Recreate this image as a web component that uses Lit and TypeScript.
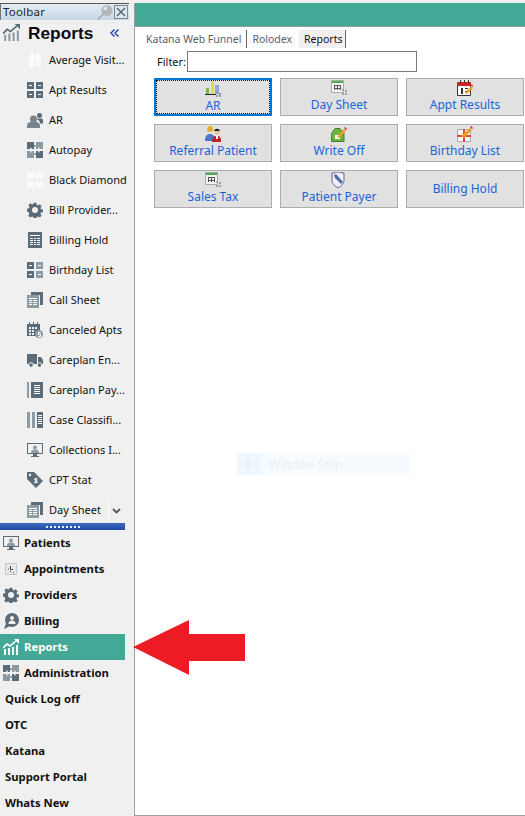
import { LitElement, html, css, svg } from "lit";
import { customElement } from "lit/decorators.js";

const G = "#5b6b77";
const L = "#8f9ba3";
const icons: Record<string, any> = {
  binoc: svg`<path fill="#fbfbfb" d="M2 6 4 1h3v4h2V1h3l2 5v9H9V9H7v6H2z"/>`,
  grid: svg`<path fill="${G}" d="M0 0h7v7H0zM9 0h7v7H9zM0 9h7v7H0zM9 9h7v7H9z"/><path fill="#fff" d="M2 3h3v1H2zM11 3h3v1h-3zM2 12h3v1H2zM11 12h3v1h-3z"/>`,
  gridL: svg`<path fill="${G}" d="M0 0h7v7H0zM0 9h7v7H0z"/><path fill="${L}" d="M9 0h7v7H9zM9 9h7v7H9z"/><path fill="#fff" d="M2 3h3v1H2zM11 3h3v1h-3zM2 12h3v1H2zM11 12h3v1h-3z"/>`,
  people: svg`<circle cx="6.500" cy="7" r="3.500" fill="#77848d"/><path fill="#77848d" d="M0 16v-2c0-3 2-4.500 6.500-4.500S13 11 13 14v2z"/><circle cx="12.500" cy="3.500" r="2.500" fill="${G}"/><path fill="${G}" d="M10.500 6.500h4c1 0 1.500 1 1.500 2v3h-3c0-2-1-3.500-3-4z"/>`,
  puzzle: svg`<path fill="${G}" d="M0 0h7v3l2 1-2 1v2H5l-1-2-1 2H0z"/><path fill="#8d99a1" d="M9 0h7v7h-3l-1-2-1 2H9V5L8 4l1-1z"/><path fill="#8d99a1" d="M0 9h3l1 2 1-2h2v2l2 1-2 1v3H0z"/><path fill="${G}" d="M9 9h2l1 2 1-2h3v7H9v-3l-1-1 1-1z"/>`,
  puzzleW: svg`<path fill="#fafafa" d="M0 0h7v3l2 1-2 1v2H5l-1-2-1 2H0zM9 0h7v7h-3l-1-2-1 2H9V5L8 4l1-1zM0 9h3l1 2 1-2h2v2l2 1-2 1v3H0zM9 9h2l1 2 1-2h3v7H9v-3l-1-1 1-1z"/>`,
  gear: svg`<path fill="${G}" d="M6.500 0h3l.4 2.300 1.400.6 2-1.300 2.100 2.100-1.300 2 .6 1.400 2.300.4v3l-2.300.4-.6 1.400 1.300 2-2.100 2.100-2-1.300-1.400.6-.4 2.300h-3l-.4-2.300-1.400-.6-2 1.300L.5 14.300l1.300-2-.6-1.400L-1 9.500v-3l2.300-.4.6-1.400-1.300-2L2.700.6l2 1.300 1.400-.6z" transform="translate(.8 .8) scale(.9)"/><circle cx="8" cy="8" r="3" fill="#f0f0f0"/>`,
  table: svg`<path fill="${G}" d="M1 0h14v16H1z"/><path fill="#fff" d="M3 3h10v1H3zM3 6h3v1H3zM7 6h2v1H7zM10 6h3v1h-3zM3 8h3v1H3zM7 8h2v1H7zM10 8h3v1h-3zM3 10h3v1H3zM7 10h2v1H7zM10 10h3v1h-3zM3 12h3v1H3zM7 12h2v1H7zM10 12h3v1h-3z"/>`,
  sheet: svg`<path fill="${G}" d="M4 0h12v13h-3V3H4z"/><path fill="${L}" d="M0 3h12v13H0z"/><path fill="#fff" d="M2 6h8v1H2zM2 8h3v1H2zM6 8h4v1H6zM2 10h3v1H2zM6 10h4v1H6zM2 12h3v1H2zM6 12h4v1H6z"/>`,
  calendar: svg`<path fill="${G}" d="M0 2h13v9h-3v3H0z"/><path fill="#f0f0f0" d="M2 5h2v2H2zM5 5h2v2H5zM8 5h2v2H8zM2 8h2v2H2zM5 8h2v2H5zM2 11h2v2H2zM5 11h2v2H5z"/><path fill="${G}" d="M2 0h1v3H2zM6 0h1v3H6zM10 0h1v3h-1z"/><circle cx="12" cy="12" r="4" fill="${L}"/><path fill="#fff" d="M11 10h3v1h-2v1h2v3h-3v-1h2v-1h-2z"/>`,
  truck: svg`<path fill="${G}" d="M0 2h10v10H0zM11 5h3l2 3v4h-5z"/><circle cx="4" cy="13" r="2.300" fill="${G}" stroke="#f0f0f0"/><circle cx="12.500" cy="13" r="2.300" fill="${G}" stroke="#f0f0f0"/>`,
  book: svg`<path fill="${L}" d="M0 0h2v16H0z"/><path fill="${G}" d="M4 0h12v16H4z"/><path fill="#fff" d="M7 3h6v1H7zM7 5h6v1H7zM7 7h6v1H7zM7 9h6v1H7zM7 11h6v1H7z"/>`,
  cols: svg`<path fill="${L}" d="M0 0h3v16H0zM5 0h3v16H5z"/><path fill="${G}" d="M10 0h6v16h-6z"/><path fill="#fff" d="M11 3h4v1h-4zM11 5h4v1h-4zM11 7h4v1h-4zM11 9h4v1h-4zM11 11h4v1h-4z"/>`,
  monitor: svg`<path fill="${G}" d="M0 1h16v11H0zM6 12h4v2h2v1H4v-1h2z"/><path fill="#f0f0f0" d="M1 2h14v9H1z"/><circle cx="8" cy="5.500" r="2" fill="${L}"/><path fill="${L}" d="M4 11c0-3 2-3.500 4-3.500s4 .5 4 3.500z"/>`,
  tag: svg`<path fill="${G}" d="M0 0h7l9 9-7 7-9-9z"/><circle cx="3" cy="3" r="1.200" fill="#f0f0f0"/><path fill="none" stroke="#fff" stroke-width="1.300" d="M10.500 6.500 8 7c-1 1 3 2 2 3.200l-3 .3"/>`,
  appt: svg`<path fill="#e6e8e8" stroke="#c4c8c8" d="M2.500 2.500h11v11h-11z"/><path fill="#444" d="M7 5h1v3h2v1H7zM5 7l1 1-1 1zM10 11l1 1-1 1zM7 10h1v1H7z"/>`,
  bubble: svg`<circle cx="9" cy="7" r="7" fill="${G}"/><path fill="${G}" d="M3 10 1 16l6-3z"/><circle cx="9" cy="5" r="2" fill="#f0f0f0"/><path fill="#f0f0f0" d="M5.500 11c0-3 2-3.500 3.500-3.500s3.500.5 3.500 3.500z"/>`,
  chartW: svg`<path fill="#f4f8f7" d="M1 10h2v6H1zM5 9h2v7H5zM9 8h2v8H9zM13 6h2v10h-2z"/><path fill="none" stroke="#fff" stroke-width="1.600" d="m0 9 4-4 3 2 6-5"/><path fill="#fff" d="M11 0h5v5z"/>`,
  chartG: svg`<path fill="${L}" d="M1 10h2v6H1zM5 9h2v7H5zM9 8h2v8H9zM13 6h2v10h-2z"/><path fill="none" stroke="${G}" stroke-width="1.600" d="m0 9 4-4 3 2 6-5"/><path fill="${G}" d="M11 0h5v5z"/>`,
};

const bIcons: Record<string, any> = {
  ar: svg`<path fill="#222" d="M0 13h11v1H0z"/><path fill="#7ab648" d="M1 7h3v6H1z"/><path fill="#f0d44a" d="M6 0h3v13H6z"/><path fill="#8fa8d8" d="M10 4h4v9h-4z"/><path fill="#99a" d="M11 11h2v2h-2zM14 12h2v2h-2zM11 14h2v2h-2zM14 14h2v2h-2z"/>`,
  sheet: svg`<path fill="#f4f4f4" stroke="#aaa" d="M.5.5h12v12H.5z"/><path fill="#4caf50" d="M1 1h11v2H1z"/><path fill="#555" d="M3 5h7v1H3zM3 8h7v1H3zM3 5h1v5H3zM6 5h1v5H6zM9 5h1v5H9z"/><path fill="#99a3ab" d="M11 9h2v2h-2zM14 10h2v2h-2zM11 13h2v2h-2zM14 13h2v2h-2z"/>`,
  appt: svg`<path fill="#fff" stroke="#333" d="M.5 2.500h13v13H.5z"/><path fill="#c22" d="M0 2h14v4H0z"/><path fill="#333" d="M3 0h1v3H3zM7 0h1v3H7zM11 0h1v3h-1z"/><path fill="#333" d="M4 8h2v6H4zM8 8h3v1H8zM8 11h3v1H8z"/><path fill="#e8a020" d="m8 13 6-7 2 2-6 6z"/><path fill="#d22" d="m14 5 1-1 1 2-1 1z"/>`,
  ref: svg`<circle cx="5" cy="3" r="3" fill="#e0b030"/><path fill="#4a78c8" d="M0 15c0-5 2-7 5-7s5 2 5 7z"/><circle cx="12" cy="6" r="2.500" fill="#e8bfa0"/><path fill="#222" d="M9 5c1-3 5-3 6 0z"/><path fill="#b22" d="M7 16c0-5 2-6 5-6s4 1 4 6z"/><path fill="#fff" d="M11 10h2v3h-2z"/>`,
  off: svg`<path fill="#6cb33f" stroke="#3c8030" d="M.5 7.500 4 2.500h5l4 5v8H.5z"/><path fill="#fff" d="M4 9h5v4H4z"/><path fill="#e8a020" d="m6 11 7-8 2 2-7 7z"/><path fill="#d22" d="m13 2 1-1 2 2-1 1z"/>`,
  bday: svg`<path fill="#f4f4f4" stroke="#aaa" d="M.5 3.500h13v12H.5z"/><path fill="#e2483d" d="M6 3h2v13H6zM0 9h14v2H0z"/><path fill="#e8a020" d="m4 10 9-8 2 2-8 8z"/><path fill="#d22" d="m13 1 1-1 2 2-1 1z"/>`,
  shield: svg`<path fill="#eef" stroke="#667" d="M1 1c3 0 4-1 6-1s3 1 6 1v7c0 4-3 6-6 8-3-2-6-4-6-8z"/><path fill="#4a6fa5" d="m3 3 2-1 7 8-2 2-6-6z"/>`,
};

const items: [string, string][] = [
  ["Average Visit...", "binoc"], ["Apt Results", "grid"], ["AR", "people"], ["Autopay", "puzzle"],
  ["Black Diamond", "puzzleW"], ["Bill Provider...", "gear"], ["Billing Hold", "table"], ["Birthday List", "gridL"],
  ["Call Sheet", "sheet"], ["Canceled Apts", "calendar"], ["Careplan En...", "truck"], ["Careplan Pay...", "book"],
  ["Case Classifi...", "cols"], ["Collections I...", "monitor"], ["CPT Stat", "tag"], ["Day Sheet", "sheet"],
];
const nav: [string, string | null][] = [
  ["Patients", "monitor"], ["Appointments", "appt"], ["Providers", "gear"], ["Billing", "bubble"], ["Reports", "chartW"],
  ["Administration", "puzzle"], ["Quick Log off", null], ["OTC", null], ["Katana", null], ["Support Portal", null], ["Whats New", null],
];
const buttons: [string, string | null][] = [
  ["AR", "ar"], ["Day Sheet", "sheet"], ["Appt Results", "appt"], ["Referral Patient", "ref"], ["Write Off", "off"],
  ["Birthday List", "bday"], ["Sales Tax", "sheet"], ["Patient Payer", "shield"], ["Billing Hold", null],
];

const ic = (n: string, cls = "ic") => html`<svg class=${cls} viewBox="0 0 16 16">${icons[n]}</svg>`;

@customElement("app-root")
export class AppRoot extends LitElement {
  static styles = css`
    :host { display: block; position: relative; width: 525px; height: 816px; overflow: hidden; background: #f0f0f0;
      font-family: "Noto Sans", "DejaVu Sans", sans-serif; font-size: 12px; color: #111; }
    .app { display: grid; grid-template-columns: 134px 1fr; height: 816px; padding-top: 3px; box-sizing: border-box; }
    .side { display: flex; flex-direction: column; min-height: 0; }
    .title { height: 17px; margin: 0 5px 0 0; box-sizing: border-box; display: flex; align-items: center; gap: 1px; padding: 0 1px 0 2px;
      background: linear-gradient(#e3ecf4, #c6d7e6); border-top: 1px solid #555; border-left: 1px solid #777; font-size: 11.500px; color: #222; }
    .title span { flex: 1; letter-spacing: .2px; padding-bottom: 1px; }
    .pin { width: 16px; height: 16px; }
    .close { width: 14px; height: 14px; border: 1px solid #7a8894; background: #dbe6ef; box-sizing: border-box; display: flex; }
    .head { height: 25px; display: flex; align-items: center; padding-left: 3px; flex: none; }
    .head .ic { width: 17px; height: 17px; }
    .head b { font: bold 17.300px "Liberation Sans", sans-serif; margin-left: 8px; flex: 1; color: #0a0a10; padding-top: 1px; }
    .chev { width: 9px; height: 8px; margin-right: 15px; margin-top: 1px; }
    .list { height: 478px; overflow: hidden; flex: none; position: relative; }
    .row { height: 30px; display: flex; align-items: center; padding-left: 27px; gap: 6px; white-space: nowrap; font-size: 11px; }
    .row span { padding-bottom: 2px; }
    .ic { width: 16px; height: 16px; flex: none; }
    .down { position: absolute; right: 10px; bottom: 2px; height: 20px; width: 15px; border-left: 1px solid #fff; display: flex; align-items: center; justify-content: center; }
    .split { height: 7px; width: 125px; flex: none; background: linear-gradient(#3f6cc0, #1f4aa0); display: flex; justify-content: center; align-items: center; }
    .split i { width: 34px; height: 2px; background: repeating-linear-gradient(90deg, #e8eef8 0 2px, transparent 2px 4px); }
    .nav { flex: 1; }
    .nrow { height: 26px; display: flex; align-items: center; padding-left: 3px; gap: 5px; font-weight: 700; font-size: 11.300px; width: 125px; box-sizing: border-box; white-space: nowrap; }
    .nrow span { padding-bottom: 2px; }
    .nrow.txt { padding-left: 5px; }
    .nrow.sel { background: #43a996; color: #fff; }
    .main { background: #fff; border-left: 1px solid #a0a0a0; border-bottom: 1px solid #a0a0a0; display: flex; flex-direction: column; min-height: 0; }
    .band { height: 23px; background: #43a996; border-bottom: 1px solid #8f9f9b; flex: none; box-sizing: content-box; }
    .tabs { display: flex; align-items: center; height: 18px; margin-top: 3px; padding-left: 11px; font-size: 10.500px; color: #5a6068; }
    .tabs span { padding-right: 5px; }
    .tabs .mid { border-left: 1px solid #666; padding: 0 7px 0 5px; height: 18px; line-height: 18px; }
    .tabs .act { background: #f0f0f0; color: #111; border-right: 1px solid #666; padding: 0 2px 0 5px; height: 18px; line-height: 18px; }
    .filter { display: flex; align-items: center; margin: 3px 0 0 22px; height: 21px; gap: 1px; font-size: 11px; }
    .filter input { width: 230px; height: 21px; box-sizing: border-box; border: 1px solid #7a7a7a; outline: 0; background: #fff; padding: 0; }
    .btns { display: grid; grid-template-columns: repeat(3, 118px); grid-auto-rows: 38px; gap: 8px; margin: 6px 0 0 19px; }
    .btn { border: 1px solid #adadad; background: #e1e1e1; display: flex; flex-direction: column; align-items: center; justify-content: flex-end; box-sizing: border-box;
      color: #1a64d8; font-size: 12px; line-height: 17px; padding-bottom: 2px; position: relative; }
    .btn.plain { justify-content: center; padding: 0 0 2px; }
    .btn svg { width: 16px; height: 16px; }
    .btn.focus { border: 2px solid #0078d7; padding-bottom: 0; }
    .btn.focus::after { content: ""; position: absolute; inset: 0; border: 1px dotted #111; }
    .ghost { position: absolute; left: 237px; top: 453px; width: 173px; height: 22px; display: flex; align-items: center; background: #f5fbff; color: #efeef0; font-size: 12px; }
    .ghost div { width: 22px; height: 22px; background: #eef6ff; display: flex; align-items: center; justify-content: center; margin-right: 10px; }
    .ghost i { width: 6px; height: 6px; border-radius: 50%; background: #f4eeee; }
    .arrow { position: absolute; left: 133px; top: 620px; width: 112px; height: 55px; }
  `;

  render() {
    return html`
      <div class="app">
        <div class="side">
          <div class="title">
            <span>Toolbar</span>
            <svg class="pin" viewBox="0 0 16 16"><circle cx="10" cy="6.500" r="5.500" fill="#b4b8bc"/><path fill="#e6e9eb" d="M6.500 6a3.500 3.500 0 0 1 3.500-3.500V6z"/><path fill="none" stroke="#a4a8ac" stroke-width="1.500" d="m6.500 10-6 5.500"/></svg>
            <div class="close"><svg viewBox="0 0 12 12"><path stroke="#5c6670" stroke-width="1.500" d="m2 2 8 8M10 2l-8 8"/></svg></div>
          </div>
          <div class="head">${ic("chartG")}<b>Reports</b><svg class="chev" viewBox="0 0 9 8"><path fill="none" stroke="#1f3fa8" stroke-width="1.400" d="M4.500.5 1 4l3.500 3.500M8.500.5 5 4l3.500 3.500"/></svg></div>
          <div class="list">
            ${items.map(([t, i]) => html`<div class="row">${ic(i)}<span>${t}</span></div>`)}
            <div class="down"><svg width="9" height="6" viewBox="0 0 9 6"><path fill="none" stroke="#555" stroke-width="1.800" d="m1 1 3.500 3.500L8 1"/></svg></div>
          </div>
          <div class="split"><i></i></div>
          <div class="nav">
            ${nav.map(([t, i]) => html`<div class="nrow ${i ? "" : "txt"} ${t === "Reports" ? "sel" : ""}">${i ? ic(i) : ""}<span>${t}</span></div>`)}
          </div>
        </div>
        <div class="main">
          <div class="band"></div>
          <div class="tabs"><span>Katana Web Funnel</span><span class="mid">Rolodex</span><span class="act">Reports</span></div>
          <div class="filter"><label>Filter:</label><input /></div>
          <div class="btns">
            ${buttons.map(([t, i], n) => html`<div class="btn ${n === 0 ? "focus" : ""} ${i ? "" : "plain"}">
              ${i ? html`<svg viewBox="0 0 16 16">${bIcons[i]}</svg>` : ""}<span>${t}</span></div>`)}
          </div>
        </div>
      </div>
      <div class="ghost"><div><i></i></div><span>Window Snip</span></div>
      <svg class="arrow" viewBox="0 0 112 55"><path fill="#ed1c24" d="M0 27 56 0v14h56v27H56v14z"/></svg>
    `;
  }
}
